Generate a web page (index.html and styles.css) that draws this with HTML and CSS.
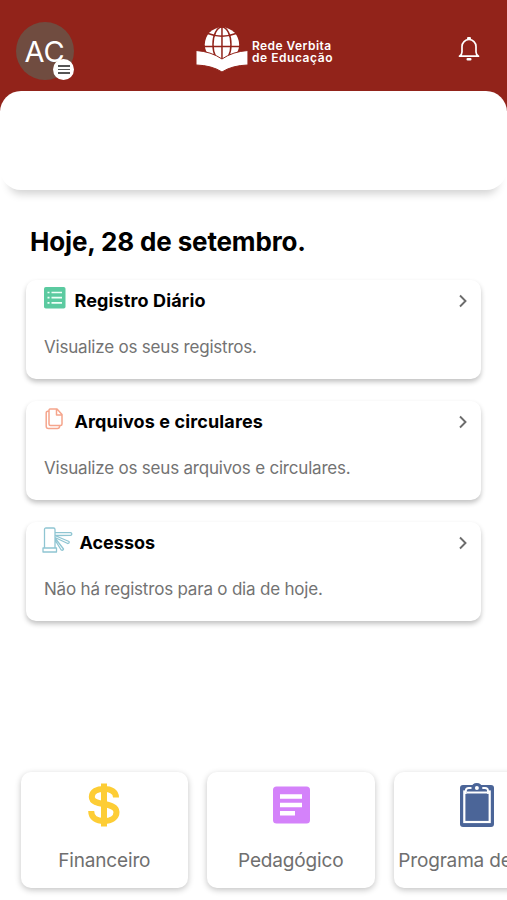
FILE: index.html
```html
<!DOCTYPE html>
<html lang="pt-BR">
<head>
<meta charset="utf-8">
<meta name="viewport" content="width=device-width, initial-scale=1">
<title>Rede Verbita de Educação</title>
<link rel="stylesheet" href="styles.css">
</head>
<body>
<div class="app">
  <header class="header">
    <div class="avatar"><span>AC</span>
      <div class="menu-badge"><i></i><i></i><i></i></div>
    </div>
    <div class="brand">
      <svg width="52" height="46" viewBox="0 0 52 46">
        <circle cx="26" cy="17.5" r="17.2" fill="#fff"/>
        <g fill="none" stroke="#92231a" stroke-width="1.5">
          <path d="M26 0v36M8 19.500h36M12 6.5Q26 12 40 6.5"/>
          <ellipse cx="26" cy="17.5" rx="9" ry="17.5"/>
        </g>
        <path d="M0 23.5Q15 24.500 26 32Q37 24.500 52 23.500V38Q36 38.500 26 45Q16 38.500 0 38Z" fill="#fff" stroke="#92231a" stroke-width="1"/>
      </svg>
      <div class="brand-name"><span>Rede Verbita</span><span class="second">de Educação</span></div>
    </div>
    <svg class="bell" width="22" height="26" viewBox="0 0 22 26" fill="none" stroke="#fff" stroke-width="1.7" stroke-linejoin="round">
      <path d="M1.500 20.200H20.500Q18 18.500 18 16V10.500A7 7 0 0 0 4 10.500V16Q4 18.500 1.500 20.200Z"/>
      <path d="M10.200 2.300h1.600M9.700 23.300h2.600" stroke-width="2.500" stroke-linecap="round"/>
    </svg>
  </header>
  <section class="panel"></section>
  <main class="content">
    <h1><span>Hoje, 28 de setembro.</span></h1>
    <article class="card">
      <div class="card-head">
        <svg class="icon-list" width="22" height="22" viewBox="0 0 22 22">
          <rect width="21.500" height="21.500" rx="1.800" fill="#5bcaa0"/>
          <path d="M3.500 5.500h2M3.500 10.700h2M3.500 15.900h2M7.500 5.500h10.500M7.500 10.700h10.500M7.500 15.900h10.500" stroke="#effff8" stroke-width="1.700"/>
        </svg>
        <h2 class="wide">Registro Diário</h2>
        <svg class="chevron" width="8" height="14" viewBox="0 0 8 14"><path d="M1 1.500L6.500 7L1 12.500"/></svg>
      </div>
      <p>Visualize os seus registros.</p>
    </article>
    <article class="card">
      <div class="card-head">
        <svg class="icon-files" width="20" height="22" viewBox="0 0 20 22" fill="none" stroke="#f5a58c" stroke-width="1.500" stroke-linejoin="round">
          <path d="M6 1h6l5 5.500V16a1.500 1.500 0 0 1-1.500 1.500H5.500A1.500 1.500 0 0 1 4 16V2.500A1.500 1.500 0 0 1 6 1ZM11.500 1v6H17M4 3Q1.200 3 1.200 5v13.200q0 2.300 2.300 2.300h9q2 0 2.200-2.500"/>
        </svg>
        <h2 class="wide">Arquivos e circulares</h2>
        <svg class="chevron" width="8" height="14" viewBox="0 0 8 14"><path d="M1 1.500L6.500 7L1 12.500"/></svg>
      </div>
      <p>Visualize os seus arquivos e circulares.</p>
    </article>
    <article class="card">
      <div class="card-head">
        <svg class="icon-gate" width="31" height="26" viewBox="0 0 31 26" fill="none" stroke="#8fc5d2" stroke-width="1.300" stroke-linejoin="round">
          <path d="M2.500 21V2.500Q2.500 1 4 1h7.500Q13 1 13 2.500V21M1 21h13.500v4H1ZM13 5.500l16 .2q1.600 1.300 0 2.600L13 8.500M14 9l13 5.500q.7 2-1.300 2L13 10.500M13 11l8.500 11q-.5 1.800-2.300 1L13 13"/>
        </svg>
        <h2>Acessos</h2>
        <svg class="chevron" width="8" height="14" viewBox="0 0 8 14"><path d="M1 1.500L6.500 7L1 12.500"/></svg>
      </div>
      <p>Não há registros para o dia de hoje.</p>
    </article>
  </main>
  <nav class="tiles">
    <a class="tile">
      <svg width="42" height="46" viewBox="0 0 42 46" fill="none" stroke="#fdcd35">
        <path d="M33 15.500C33 9.500 28 7 21 7S8.800 9.500 8.800 15C8.800 25 33.500 19 33.500 30C33.500 35.500 28.500 39 21 39S8.200 36 8.200 29" stroke-width="6"/>
        <path d="M21 1.500v43" stroke-width="6"/>
      </svg>
      <span>Financeiro</span>
    </a>
    <a class="tile">
      <svg width="42" height="46" viewBox="0 0 42 46">
        <rect x="3" y="4.500" width="37" height="37" rx="3.500" fill="#d482fa"/>
        <path d="M10 14.500h22M10 23h22M10 31.300h15" stroke="#fff" stroke-width="4.600"/>
      </svg>
      <span>Pedagógico</span>
    </a>
    <a class="tile">
      <svg width="42" height="46" viewBox="0 0 42 46">
        <rect x="4" y="3" width="34" height="42" rx="3" fill="#4b6598"/>
        <rect x="8.300" y="9.500" width="25.400" height="30.500" fill="none" stroke="#fff" stroke-width="2.200"/>
        <path d="M10.500 11V7.500q0-2 2.500-2h2.500Q16 1 20.800 1T26 5.500h2.500q2.500 0 2.500 2V11Z" fill="#4b6598"/>
        <path d="M9.800 12V8.800q0-2.800 3-2.800h2.700M32 12V8.800q0-2.800-3-2.800h-2.700" fill="none" stroke="#fff" stroke-width="1.800"/>
        <path d="M10.900 10.500H31" stroke="#fff" stroke-width="2"/>
        <circle cx="20.900" cy="6" r="2" fill="#fff"/>
      </svg>
      <span class="long">Programa de</span>
    </a>
  </nav>
</div>
</body>
</html>
```
FILE: styles.css
```css
* { box-sizing: border-box; }
body, h1, h2, p { margin: 0; }
body { background: #fff; font-family: Inter, "Liberation Sans", sans-serif; overflow: hidden; }
.app { width: 507px; height: 900px; overflow: hidden; display: flex; flex-direction: column; }
.header {
  flex: none; height: 111px; margin-bottom: -20px; padding: 0 27px 20px 16px;
  background: #92231a; display: grid; grid-template-columns: 1fr auto 1fr; align-items: start;
}
.avatar {
  position: relative; width: 58px; height: 58px; margin-top: 22px; border-radius: 50%;
  background: #704c40; color: #fff; display: flex; align-items: center; justify-content: center;
  font-size: 29px; font-weight: 400; line-height: 1;
}
.avatar span { padding: 1px 1px 0 0; }
.menu-badge {
  position: absolute; left: 37px; top: 37px; width: 21px; height: 21px; border-radius: 50%;
  background: #fff; display: flex; flex-direction: column; gap: 2px; align-items: center; justify-content: center;
}
.menu-badge i { width: 12px; height: 1.500px; background: #555; }
.brand { display: flex; width: 137px; margin-top: 27px; margin-left: 33px; gap: 4px; color: #fff; }
.brand-name {
  display: flex; flex-direction: column; margin-top: 13px; white-space: nowrap;
  font-size: 12px; line-height: 12px; font-weight: 600; letter-spacing: .45px;
}
.brand-name .second { letter-spacing: .55px; }
.bell { justify-self: end; margin-top: 36px; }
.panel {
  flex: none; height: 99px; border-radius: 21px; background: #fff; position: relative;
  box-shadow: 0 13px 9px -9px rgba(0,0,0,.18);
}
.content { padding: 0 26px; }
h1 { margin: 36px 0 0 4px; height: 54px; font-size: 26px; line-height: 32px; font-weight: 650; letter-spacing: -.15px; white-space: nowrap; }
.card {
  height: 99px; margin-bottom: 22px; padding: 8px 14px 0 16px; border-radius: 10px; background: #fff;
  box-shadow: 0 3px 5px rgba(0,0,0,.24);
}
.card-head { display: flex; height: 26px; align-items: flex-start; }
h2 { font-size: 18px; line-height: 26px; font-weight: 650; white-space: nowrap; }
h2.wide { letter-spacing: .13px; }
.icon-list { margin: -1px 9px 0 1.500px; }
.icon-files { margin: -1px 10px 0 2.500px; }
.icon-gate { margin: -3px 7px 0 -.5px; }
.chevron { margin: 6px 0 0 auto; fill: none; stroke: #6c6c6c; stroke-width: 1.900; }
.card p { margin: 20px 0 0 2px; font-size: 17px; line-height: 26px; letter-spacing: -.2px; color: #737373; white-space: nowrap; }
.tiles { display: flex; gap: 19px; margin: auto 0 12px 20.500px; }
.tile {
  flex: none; width: 167.500px; height: 116px; padding-top: 10px; border-radius: 10px; background: #fff;
  box-shadow: 0 2px 6px rgba(0,0,0,.24); display: flex; flex-direction: column; align-items: center;
  font-size: 19px; letter-spacing: -.16px; color: #6f6f6f; line-height: 26px; white-space: nowrap;
}
.tile span { margin-top: 20px; }
.tile .long { width: 158px; }
```
